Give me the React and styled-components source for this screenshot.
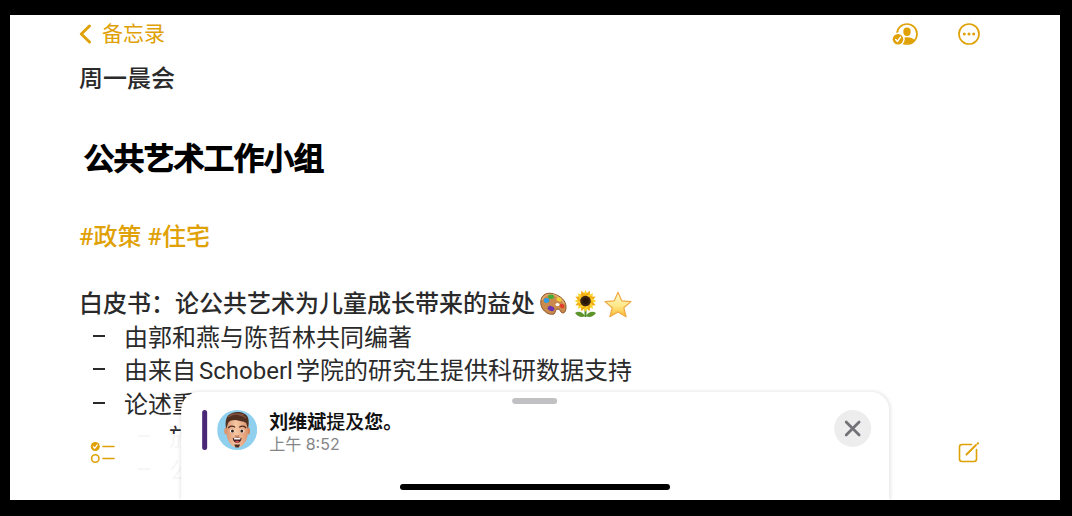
import React from "react";
import styled, { createGlobalStyle } from "styled-components";

const accent = "#e0a106";
const ink = "#2a2a2b";

const GlobalStyle = createGlobalStyle`
  * { box-sizing: border-box; }
  body {
    margin: 0;
    background: #000;
    color: ${ink};
    font-family: Inter, "Noto Sans CJK SC", sans-serif;
  }
`;

const Device = styled.div`
  min-height: 100vh;
  padding: 15px 12px 16px 10px;
  display: flex;
  background: #000;
`;

const Screen = styled.main`
  position: relative;
  flex: 1;
  min-width: 0;
  height: calc(100vh - 31px);
  overflow: hidden;
  background: #fff;
`;

const TopBar = styled.header`
  display: flex;
  align-items: center;
  justify-content: space-between;
  height: 38px;
  padding: 0 79px 0 69px;
`;

const BackLink = styled.a`
  display: flex;
  align-items: center;
  gap: 10px;
  color: ${accent};
  font-size: 21px;
  line-height: 32px;
  text-decoration: none;
`;

const Actions = styled.div`
  display: flex;
  align-items: center;
  gap: 38px;
`;

const IconButton = styled.button`
  display: flex;
  padding: 0;
  border: 0;
  background: none;
  color: ${accent};
`;

const Note = styled.article`
  padding: 9px 69px 0;
  font-size: 24px;
  line-height: 34px;
  white-space: nowrap;
`;

const Title = styled.h1`
  margin: 0;
  font-size: 24px;
  font-weight: 500;
`;

const Handwriting = styled.p`
  margin: 40px 0 0;
  padding-left: 5px;
  color: #000;
  font-size: 30px;
  font-weight: 400;
  line-height: 44px;
  -webkit-text-stroke: 2px currentColor;
  stroke-linejoin: round;
`;

const Tags = styled.p`
  display: flex;
  gap: 6px;
  margin: 40px 0 0;
`;

const Tag = styled.a`
  color: ${accent};
  font-family: Roboto, "Noto Sans CJK SC", sans-serif;
  font-weight: 500;
  text-decoration: none;
`;

const Heading = styled.h2`
  display: flex;
  align-items: center;
  gap: 5px;
  margin: 33px 0 0;
  font-size: 24px;
  font-weight: 500;
  svg { flex: none; }
`;

const List = styled.ul`
  margin: 0;
  padding: 0 0 0 45px;
  line-height: 33px;
  list-style: none;
`;

const Item = styled.li`
  &::before {
    content: "";
    float: left;
    width: 12px;
    height: 2px;
    margin: 14px 0 0 -31px;
    background: ${ink};
  }
`;

const Latin = styled.span`
  margin: 0 3px;
  font-family: Roboto, sans-serif;
`;

const BottomBar = styled.footer`
  position: absolute;
  inset: auto 0 0;
  display: flex;
  align-items: flex-start;
  justify-content: space-between;
  height: 66px;
  padding: 7px 79px 0 80px;
  background: rgba(255, 255, 255, 0.96);
`;

const Sheet = styled.section`
  position: absolute;
  bottom: 0;
  left: 50%;
  transform: translateX(-50%);
  width: 67.4%;
  height: 108px;
  padding: 6px 18px 0;
  border-radius: 18px 18px 0 0;
  background: #fff;
  box-shadow: 0 0 4px rgba(0, 0, 0, 0.14);
`;

const Grabber = styled.div`
  width: 45px;
  height: 6px;
  margin: 0 auto;
  border-radius: 3px;
  background: #c1c1c4;
`;

const Mention = styled.div`
  display: flex;
  align-items: flex-start;
  padding: 6px 0 0 3px;
`;

const Marker = styled.div`
  width: 5px;
  height: 40px;
  margin-right: 10px;
  border-radius: 3px;
  background: #4b2777;
`;

const Avatar = styled.svg`
  width: 40px;
  height: 40px;
  margin-right: 12px;
`;

const MentionText = styled.div`
  flex: 1;
`;

const Message = styled.p`
  margin: 0;
  padding-top: 2px;
  color: #111;
  font-size: 19px;
  font-weight: 500;
  line-height: 22px;
`;

const Time = styled.time`
  display: block;
  color: #858587;
  font-size: 16px;
  line-height: 20px;
`;

const CloseButton = styled.button`
  display: grid;
  place-items: center;
  width: 37px;
  height: 37px;
  padding: 0;
  border: 0;
  border-radius: 50%;
  background: #ededee;
  color: #727277;
`;

const HomeIndicator = styled.div`
  position: absolute;
  bottom: 10px;
  left: 50%;
  transform: translateX(-50%);
  width: 270px;
  height: 6px;
  border-radius: 3px;
  background: #000;
`;

function Palette() {
  return (
    <svg width="27" height="24" viewBox="0 0 27 24" role="img" aria-label="调色板">
      <path d="M1 8C2 2 8 0 14 2c7 2 12 7 12 13 0 3-1 6-3 6-3 0-2-4-5-4s-2 3-4 5C8 24-1 17 1 8Z" fill="#c98a4b" stroke="#8f572a" strokeWidth="1" />
      <path d="M2 8C4 3 9 2 14 3c5 2 9 5 10 9" fill="none" stroke="#e3ad70" strokeWidth="1.4" />
      <ellipse cx="11" cy="4.700" rx="3" ry="2.200" fill="#45ad35" />
      <ellipse cx="6.500" cy="8.500" rx="2.700" ry="2.400" fill="#2e9de8" />
      <ellipse cx="19" cy="7.500" rx="2.800" ry="2" fill="#f1cf35" transform="rotate(25 19 7.500)" />
      <ellipse cx="11" cy="16.500" rx="3.400" ry="2.500" fill="#6a34b2" transform="rotate(20 11 16.500)" />
      <ellipse cx="22" cy="14" rx="2.400" ry="2" fill="#e23c2b" transform="rotate(35 22 14)" />
      <ellipse cx="17.500" cy="12.500" rx="2" ry="1.600" fill="#fff" />
    </svg>
  );
}

function Sunflower() {
  const petals = Array.from({ length: 16 }, (_, i) => i * 22.5);
  return (
    <svg width="27" height="28" viewBox="0 0 27 28" role="img" aria-label="向日葵">
      <path d="M13.500 18v9" stroke="#4b8b25" strokeWidth="2" />
      <path d="M13 26C10 21 6 21 3 23c3 4 7 5 10 3ZM14 26c3-5 7-5 10-3-3 4-7 5-10 3Z" fill="#5c932b" />
      {petals.map((angle) => (
        <path key={angle} d="M13.500 11 10.700 5.500 13.500 0 16.300 5.500Z" fill={angle % 45 ? "#f2ae12" : "#fcd52c"} transform={`rotate(${angle} 13.500 11)`} />
      ))}
      <circle cx="13.500" cy="11" r="5.300" fill="#3c2413" />
      <circle cx="13.500" cy="11" r="3" fill="#281407" />
    </svg>
  );
}

function Star() {
  return (
    <svg width="28" height="27" viewBox="0 0 28 27" role="img" aria-label="星星">
      <defs>
        <linearGradient id="starFill" x1="0" y1="0" x2="0" y2="1">
          <stop offset="0" stopColor="#fffbd0" />
          <stop offset="0.55" stopColor="#ffe88a" />
          <stop offset="1" stopColor="#f9b92c" />
        </linearGradient>
      </defs>
      <path d="m14 1.200 3.700 8.600 9.300.8-7.200 6.100 2.300 9.100-8.100-4.900-8.100 4.900 2.300-9.100L1 10.600l9.300-.8Z" fill="url(#starFill)" stroke="#efa944" strokeWidth="1.200" strokeLinejoin="round" />
    </svg>
  );
}

function Face() {
  return (
    <Avatar viewBox="0 0 40 40" role="img" aria-label="刘维斌">
      <defs>
        <clipPath id="face"><circle cx="20" cy="20" r="20" /></clipPath>
        <linearGradient id="skin" x1="0" x2="1">
          <stop offset="0" stopColor="#d99470" />
          <stop offset=".45" stopColor="#f7c7a3" />
          <stop offset="1" stopColor="#dc946e" />
        </linearGradient>
      </defs>
      <g clipPath="url(#face)">
        <path fill="#8fd0ee" d="M0 0h40v40H0z" />
        <ellipse cx="8.800" cy="21" rx="1.700" ry="3.500" fill="#dc946f" />
        <ellipse cx="31.200" cy="21" rx="1.700" ry="3.500" fill="#d48660" />
        <path d="M9 14c0-7 22-7 22 0l-.5 11c-.7 6-5 12.500-10.500 12.500S10.200 31 9.500 25Z" fill="url(#skin)" />
        <path d="M9 19C7.500 11 9 5 15 3c5-2 14-1 16 5 1 4 .5 7-.2 11l-1.800-6c-3-2-7-2-11-3-4 0-6 1-7 3Z" fill="#513022" />
        <path d="M11 7c5-4 12-3 18 1M13 5c5-2 10-1 14 0" stroke="#815342" strokeWidth="1.200" fill="none" />
        <path d="M11.500 17.500c2-1.700 4-1.600 6-.5M22.500 17c2-1.100 4-1.200 6 .5" stroke="#4a2a1e" strokeWidth="1.300" fill="none" strokeLinecap="round" />
        <ellipse cx="15" cy="21" rx="2.300" ry="1.700" fill="#fff" />
        <ellipse cx="25" cy="21" rx="2.300" ry="1.700" fill="#fff" />
        <circle cx="15.300" cy="21" r="1.500" fill="#342119" />
        <circle cx="24.700" cy="21" r="1.500" fill="#342119" />
        <path d="M18 25.500c1 1 3 1 4 0" fill="none" stroke="#b9714e" strokeWidth="1.200" />
        <path d="M15.500 28c3-.8 6-.8 9 0-.4 3.500-2.400 5-4.500 5s-4.100-1.500-4.500-5Z" fill="#40191a" />
        <path d="M16.500 28.300c2-.4 5-.4 7 0l-.5 1.100h-6Z" fill="#fff" />
        <ellipse cx="20" cy="31.700" rx="2" ry="1" fill="#da5960" />
        <path d="M17 34.500h6L21.500 37.500h-3Z" fill="#513022" />
      </g>
    </Avatar>
  );
}

export default function App() {
  return (
    <Device>
      <GlobalStyle />
      <Screen>
        <TopBar>
          <BackLink href="#notes">
            <svg width="13" height="20" viewBox="0 0 13 20" fill="none" stroke="currentColor" strokeWidth="2.900" strokeLinecap="round" strokeLinejoin="round" aria-hidden="true">
              <path d="M10.500 2 2.300 10l8.200 8" />
            </svg>
            备忘录
          </BackLink>
          <Actions>
            <IconButton aria-label="共享的备忘录">
              <svg width="27" height="24" viewBox="0 0 27 24" aria-hidden="true">
                <defs><clipPath id="person"><circle cx="15" cy="12" r="9.800" /></clipPath></defs>
                <circle cx="15" cy="12" r="10" fill="none" stroke="currentColor" strokeWidth="1.700" />
                <g clipPath="url(#person)" fill="currentColor">
                  <ellipse cx="15" cy="9.700" rx="3.700" ry="4.200" />
                  <ellipse cx="15" cy="20" rx="8" ry="4.800" />
                </g>
                <circle cx="6" cy="17.300" r="6.700" fill="#fff" />
                <circle cx="6" cy="17.300" r="5.300" fill="currentColor" />
                <path d="m3.700 17.500 1.700 2 3.100-4.400" fill="none" stroke="#fff" strokeWidth="1.400" strokeLinecap="round" strokeLinejoin="round" />
              </svg>
            </IconButton>
            <IconButton aria-label="更多">
              <svg width="24" height="24" viewBox="0 0 24 24" aria-hidden="true">
                <circle cx="12" cy="12" r="10" fill="none" stroke="currentColor" strokeWidth="1.700" />
                <g fill="currentColor">
                  <circle cx="7.300" cy="12" r="1.500" />
                  <circle cx="12" cy="12" r="1.500" />
                  <circle cx="16.700" cy="12" r="1.500" />
                </g>
              </svg>
            </IconButton>
          </Actions>
        </TopBar>

        <Note>
          <Title>周一晨会</Title>
          <Handwriting>公共艺术工作小组</Handwriting>
          <Tags>
            <Tag href="#policy">#政策</Tag>
            <Tag href="#housing">#住宅</Tag>
          </Tags>
          <Heading>
            白皮书：论公共艺术为儿童成长带来的益处
            <Palette />
            <Sunflower />
            <Star />
          </Heading>
          <List>
            <Item>由郭和燕与陈哲林共同编著</Item>
            <Item>由来自<Latin>Schoberl</Latin>学院的研究生提供科研数据支持</Item>
            <Item>
              论述重点：
              <List>
                <Item>放</Item>
                <Item>公</Item>
              </List>
            </Item>
          </List>
        </Note>

        <BottomBar>
          <IconButton aria-label="核对清单">
            <svg width="26" height="24" viewBox="0 0 26 24" aria-hidden="true">
              <circle cx="5.300" cy="5.500" r="4.500" fill="currentColor" />
              <path d="m3.300 5.700 1.400 1.600 2.600-3.500" fill="none" stroke="#fff" strokeWidth="1.200" strokeLinecap="round" strokeLinejoin="round" />
              <circle cx="5.300" cy="17.500" r="3.700" fill="none" stroke="currentColor" strokeWidth="1.600" />
              <path d="M13 5.500h11M13 17.500h11" stroke="currentColor" strokeWidth="1.600" strokeLinecap="round" />
            </svg>
          </IconButton>
          <IconButton aria-label="新建备忘录">
            <svg width="24" height="24" viewBox="0 0 24 24" fill="none" stroke="currentColor" aria-hidden="true">
              <path d="M14.500 3.500H5A2.500 2.500 0 0 0 2.500 6v12A2.500 2.500 0 0 0 5 20.500h12a2.500 2.500 0 0 0 2.500-2.500V8.500" strokeWidth="1.600" strokeLinecap="round" />
              <path d="m9.500 13.500 9.500-9.500" strokeWidth="2" strokeLinecap="round" />
              <path d="m20.700 2.500.3-.3" strokeWidth="2.200" strokeLinecap="round" />
            </svg>
          </IconButton>
        </BottomBar>

        <Sheet>
          <Grabber />
          <Mention>
            <Marker />
            <Face />
            <MentionText>
              <Message><b>刘维斌</b>提及<b>您。</b></Message>
              <Time dateTime="08:52">上午 8:52</Time>
            </MentionText>
            <CloseButton aria-label="关闭">
              <svg width="17" height="17" viewBox="0 0 17 17" stroke="currentColor" strokeWidth="2.700" strokeLinecap="round" aria-hidden="true">
                <path d="m2 2 13 13M15 2 2 15" />
              </svg>
            </CloseButton>
          </Mention>
        </Sheet>
        <HomeIndicator />
      </Screen>
    </Device>
  );
}
